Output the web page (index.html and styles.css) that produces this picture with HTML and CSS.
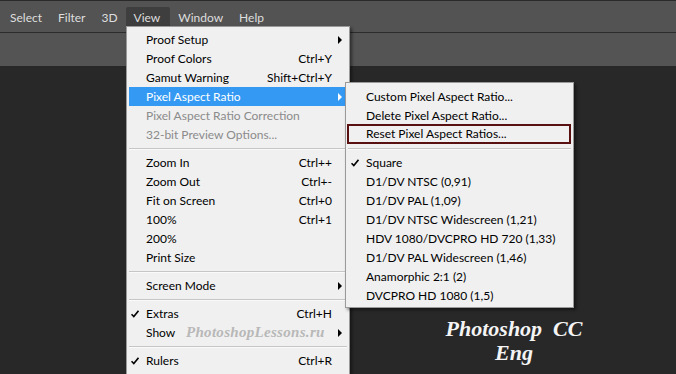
FILE: index.html
```html
<!DOCTYPE html>
<html>
<head>
<meta charset="UTF-8">
<title>View menu</title>
<link rel="stylesheet" href="styles.css">
</head>
<body>
	<div class="topline"></div>
	<div class="menubar">
		<span class="item">Select</span>
		<span class="item">Filter</span>
		<span class="item">3D</span>
		<span class="item open">View</span>
		<span class="item">Window</span>
		<span class="item">Help</span>
	</div>
	<div class="options"></div>
	<div class="canvas">
		<p class="logo">Photoshop&nbsp; CC<br>Eng</p>
	</div>

	<div class="menu view">
		<div class="row"><span class="chk"></span><span class="lbl">Proof Setup</span><span class="key"></span><span class="arr"><i></i></span></div>
		<div class="row"><span class="chk"></span><span class="lbl">Proof Colors</span><span class="key">Ctrl+Y</span><span class="arr"></span></div>
		<div class="row"><span class="chk"></span><span class="lbl">Gamut Warning</span><span class="key">Shift+Ctrl+Y</span><span class="arr"></span></div>
		<div class="row hot"><span class="chk"></span><span class="lbl">Pixel Aspect Ratio</span><span class="key"></span><span class="arr"><i></i></span></div>
		<div class="row off"><span class="chk"></span><span class="lbl">Pixel Aspect Ratio Correction</span><span class="key"></span><span class="arr"></span></div>
		<div class="row off"><span class="chk"></span><span class="lbl">32-bit Preview Options...</span><span class="key"></span><span class="arr"></span></div>
		<div class="sep"></div>
		<div class="row"><span class="chk"></span><span class="lbl">Zoom In</span><span class="key">Ctrl++</span><span class="arr"></span></div>
		<div class="row"><span class="chk"></span><span class="lbl">Zoom Out</span><span class="key">Ctrl+-</span><span class="arr"></span></div>
		<div class="row"><span class="chk"></span><span class="lbl">Fit on Screen</span><span class="key">Ctrl+0</span><span class="arr"></span></div>
		<div class="row"><span class="chk"></span><span class="lbl">100%</span><span class="key">Ctrl+1</span><span class="arr"></span></div>
		<div class="row"><span class="chk"></span><span class="lbl">200%</span><span class="key"></span><span class="arr"></span></div>
		<div class="row"><span class="chk"></span><span class="lbl">Print Size</span><span class="key"></span><span class="arr"></span></div>
		<div class="sep"></div>
		<div class="row"><span class="chk"></span><span class="lbl">Screen Mode</span><span class="key"></span><span class="arr"><i></i></span></div>
		<div class="sep"></div>
		<div class="row"><span class="chk"><svg width="8" height="8" viewBox="0 0 8 8"><path d="M0.5 4.2 L2.8 6.6 L7.5 0.8" fill="none" stroke="#000" stroke-width="1.6"/></svg></span><span class="lbl">Extras</span><span class="key">Ctrl+H</span><span class="arr"></span></div>
		<div class="row show"><span class="chk"></span><span class="lbl">Show</span><span class="key"></span><span class="arr"><i></i></span><em class="mark">PhotoshopLessons.ru</em></div>
		<div class="sep"></div>
		<div class="row"><span class="chk"><svg width="8" height="8" viewBox="0 0 8 8"><path d="M0.5 4.2 L2.8 6.6 L7.5 0.8" fill="none" stroke="#000" stroke-width="1.6"/></svg></span><span class="lbl">Rulers</span><span class="key">Ctrl+R</span><span class="arr"></span></div>
		<div class="sep"></div>
	</div>

	<div class="menu sub">
		<div class="row"><span class="chk"></span><span class="lbl">Custom Pixel Aspect Ratio...</span></div>
		<div class="row"><span class="chk"></span><span class="lbl">Delete Pixel Aspect Ratio...</span></div>
		<div class="row boxed"><span class="chk"></span><span class="lbl">Reset Pixel Aspect Ratios...</span></div>
		<div class="sep"></div>
		<div class="row"><span class="chk"><svg width="8" height="8" viewBox="0 0 8 8"><path d="M0.5 4.2 L2.8 6.6 L7.5 0.8" fill="none" stroke="#000" stroke-width="1.6"/></svg></span><span class="lbl">Square</span></div>
		<div class="row"><span class="chk"></span><span class="lbl">D1/DV NTSC (0,91)</span></div>
		<div class="row"><span class="chk"></span><span class="lbl">D1/DV PAL (1,09)</span></div>
		<div class="row"><span class="chk"></span><span class="lbl">D1/DV NTSC Widescreen (1,21)</span></div>
		<div class="row"><span class="chk"></span><span class="lbl">HDV 1080/DVCPRO HD 720 (1,33)</span></div>
		<div class="row"><span class="chk"></span><span class="lbl">D1/DV PAL Widescreen (1,46)</span></div>
		<div class="row"><span class="chk"></span><span class="lbl">Anamorphic 2:1 (2)</span></div>
		<div class="row"><span class="chk"></span><span class="lbl">DVCPRO HD 1080 (1,5)</span></div>
	</div>
</body>
</html>
```

FILE: styles.css
```css
body {
	margin: 0;
	width: 676px;
	height: 374px;
	overflow: hidden;
	background-color: #282828;
	font-family: Lato, "Liberation Sans", sans-serif;
	font-size: 12px;
}

.topline {
	height: 1px;
	background-color: #2a2a2a;
}

.menubar {
	height: 31px;
	background-color: #535353;
	border-bottom: 1px solid #2c2c2c;
	display: flex;
	align-items: flex-end;
	padding-left: 2px;
}

.item {
	color: #dedede;
	font-size: 12px;
	height: 25px;
	line-height: 22px;
	padding: 0 8px;
	border-radius: 2px 2px 0 0;
}

.open {
	background-color: #3e3e3e;
	padding-right: 10px;
}

.options {
	height: 33px;
	background-color: #545454;
}

.canvas {
	height: 308px;
}

.logo {
	margin: 0;
	padding-top: 251px;
	padding-left: 418px;
	width: 192px;
	text-align: center;
	color: #f4f4f4;
	font-family: "Liberation Serif", serif;
	font-style: italic;
	font-weight: bold;
	font-size: 22px;
	line-height: 24px;
}

.menu {
	position: absolute;
	background-color: #f0f0f0;
	border: 1px solid #9a9a9a;
	box-shadow: 2px 2px 3px rgba(0, 0, 0, 0.45);
	color: #000;
}

.view {
	left: 126px;
	top: 26px;
	width: 218px;
	padding: 3px 2px 0 2px;
}

.sub {
	left: 345px;
	top: 82px;
	width: 223px;
	padding: 4px 2px 2px 2px;
}

.row {
	display: flex;
	height: 19px;
	line-height: 19px;
	align-items: center;
}

.show {
	position: relative;
}

.chk {
	width: 17px;
	height: 19px;
	flex: none;
	display: flex;
	align-items: center;
	padding-left: 2px;
	box-sizing: border-box;
}

.sub .chk {
	width: 18px;
	padding-left: 3px;
}

.lbl {
	flex: 1;
	white-space: nowrap;
}

.key {
	text-align: right;
}

.arr {
	width: 15px;
	flex: none;
	height: 19px;
	position: relative;
}

.arr i {
	position: absolute;
	left: 6px;
	top: 6px;
	border-top: 4px solid transparent;
	border-bottom: 4px solid transparent;
	border-left: 4px solid #000;
}

.hot {
	background-color: #3399f3;
	color: #fff;
}

.hot .arr i {
	border-left-color: #fff;
}

.off {
	color: #8b8b8b;
}

.sep {
	height: 9px;
	display: flex;
	align-items: center;
}

.sep::after {
	content: "";
	display: block;
	width: 100%;
	height: 1px;
	background-color: #c6c6c6;
	border-bottom: 1px solid #fafafa;
}

.boxed {
	margin: -1px 0 0 -1px;
	border: 2px solid #581010;
	height: 20px;
	box-sizing: border-box;
	line-height: 16px;
}

.boxed .chk {
	height: 16px;
	width: 17px;
}

.mark {
	position: absolute;
	left: 57px;
	top: 0;
	line-height: 19px;
	color: #b8b8b8;
	font-family: "Liberation Serif", serif;
	font-style: italic;
	font-weight: bold;
	font-size: 15px;
	letter-spacing: 0.3px;
}
```
